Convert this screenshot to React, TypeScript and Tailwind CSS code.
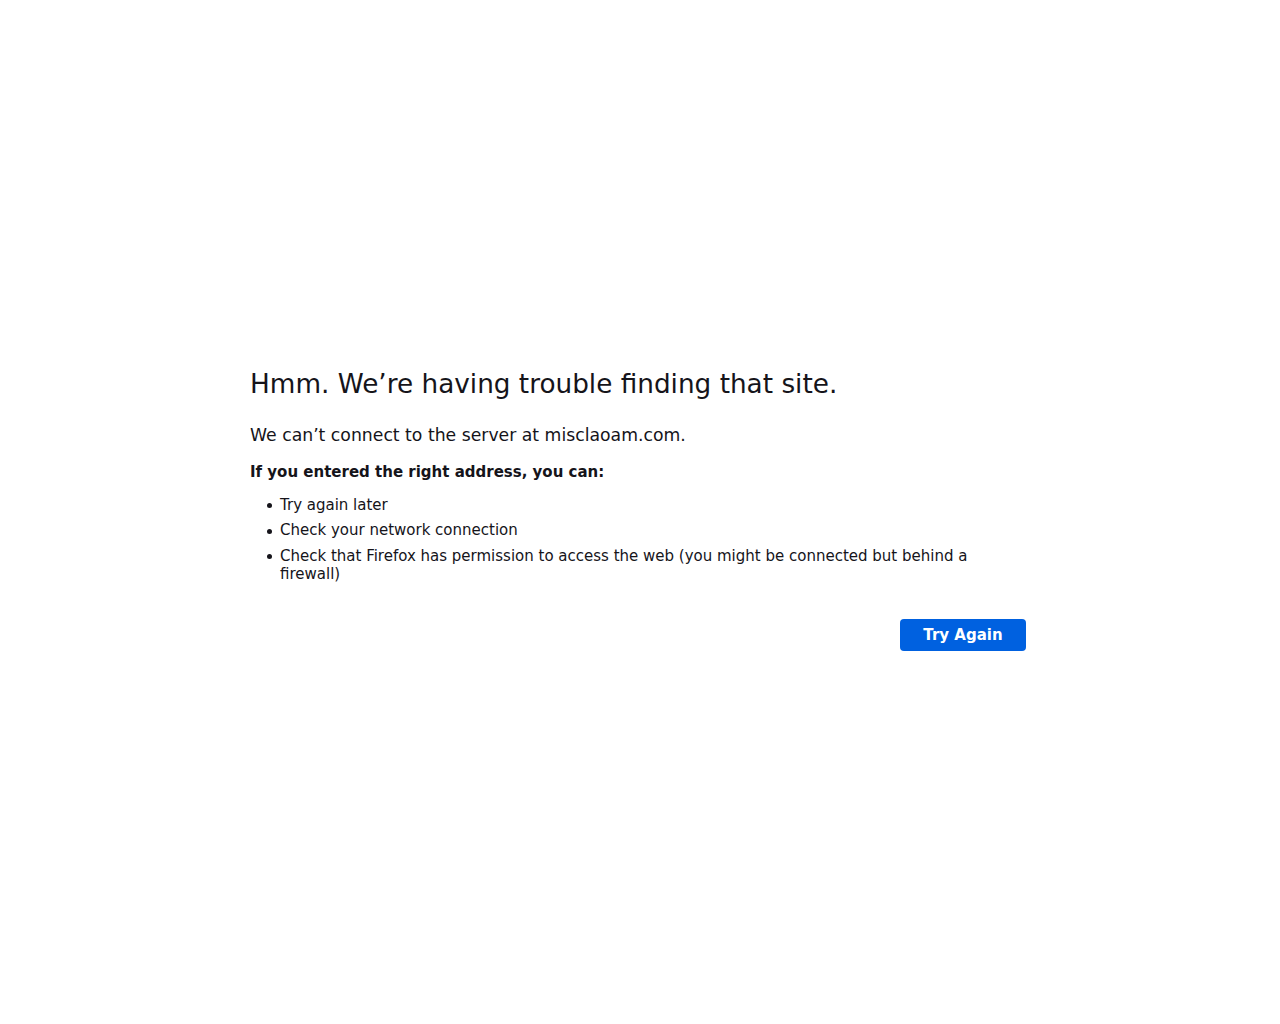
const tips = [
  "Try again later",
  "Check your network connection",
  "Check that Firefox has permission to access the web (you might be connected but behind a firewall)",
];

export default function App() {
  return (
    <div
      className="flex min-h-screen justify-center bg-white pt-[369px] text-[#15141a]"
      style={{ fontFamily: '"DejaVu Sans", sans-serif' }}
    >
      <div className="ml-[-4px] w-[776px]">
        <h1 className="text-[26.3px] leading-[1.2] font-normal">
          Hmm. We’re having trouble finding that site.
        </h1>
        <p className="mt-[22px] text-[17.25px] leading-[1.4]">
          We can’t connect to the server at misclaoam.com.
        </p>
        <p className="mt-[15px] text-[15px] font-bold leading-[1.4]">
          If you entered the right address, you can:
        </p>
        <ul className="mt-[13px] flex flex-col gap-[7.5px] text-[15px] leading-[18px]">
          {tips.map((tip) => (
            <li key={tip} className="flex pr-[50px]">
              <span className="flex h-[18px] w-[30px] shrink-0 items-center pl-[17px] pt-[2px]">
                <span className="h-[5px] w-[5px] rounded-full bg-[#15141a]" />
              </span>
              <span>{tip}</span>
            </li>
          ))}
        </ul>
        <div className="mt-[36px] flex justify-end">
          <button className="h-[32px] w-[126px] rounded-[4px] bg-[#0061e0] pt-[2px] text-[15px] font-bold text-white">
            Try Again
          </button>
        </div>
      </div>
    </div>
  );
}
